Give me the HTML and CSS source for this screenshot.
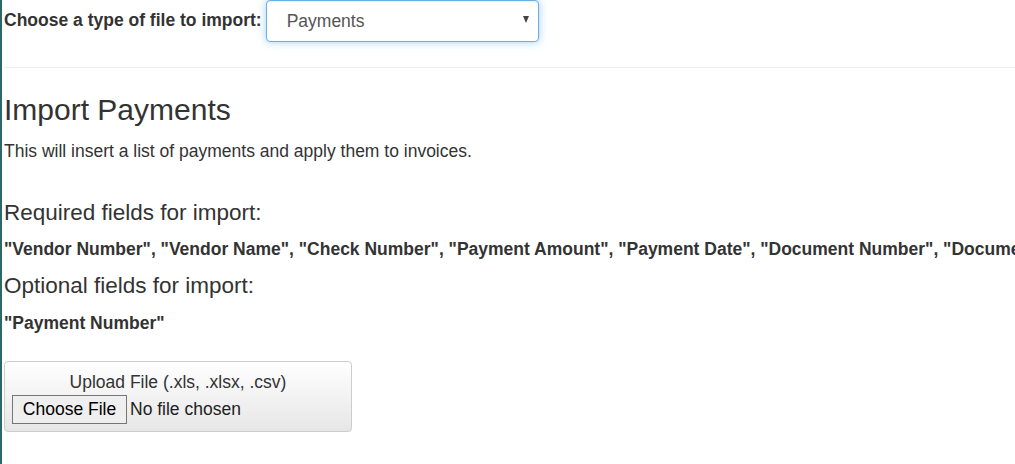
FILE: index.html
```html
<!DOCTYPE html>
<html>
<head>
<meta charset="utf-8">
<link rel="stylesheet" href="styles.css">
</head>
<body>
<div class="page">
  <div class="type-row">
    <label class="type-label" for="type">Choose a type of file to import:</label>
    <div class="select-wrap">
      <select id="type" class="type-select">
        <option>Payments</option>
      </select>
    </div>
  </div>
  <hr class="divider">
  <h2 class="title">Import Payments</h2>
  <p class="desc">This will insert a list of payments and apply them to invoices.</p>
  <h4 class="fields-head">Required fields for import:</h4>
  <div class="fields">"Vendor Number", "Vendor Name", "Check Number", "Payment Amount", "Payment Date", "Document Number", "Document Amount", "Discount Amount"</div>
  <h4 class="fields-head">Optional fields for import:</h4>
  <div class="fields">"Payment Number"</div>
  <div class="upload">
    <div class="upload-title">Upload File (.xls, .xlsx, .csv)</div>
    <div class="file-row"><button class="file-btn" type="button">Choose File</button><span class="file-none">No file chosen</span></div>
  </div>
</div>
</body>
</html>
```
FILE: styles.css
```css
html, body {
  margin: 0;
  padding: 0;
  background: #fff;
  overflow: hidden;
}
body {
  font-family: "Liberation Sans", Arial, sans-serif;
  color: #333;
  font-size: 17.5px;
}
.page {
  border-left: 2px solid #2d6868;
  padding-left: 2px;
  min-height: 464px;
  box-sizing: border-box;
  white-space: nowrap;
  overflow: hidden;
}
.type-row {
  display: flex;
  align-items: center;
  height: 42px;
}
.type-label {
  font-weight: bold;
  font-size: 17.5px;
  color: #333;
  position: relative;
  top: -1px;
}
.select-wrap {
  position: relative;
  margin-left: 4px;
}
.select-wrap::after {
  content: "";
  position: absolute;
  right: 10px;
  top: 16px;
  border-left: 3.5px solid transparent;
  border-right: 3.5px solid transparent;
  border-top: 7px solid #444;
}
.type-select {
  -webkit-appearance: none;
  appearance: none;
  display: block;
  width: 273px;
  height: 42px;
  box-sizing: border-box;
  border: 1px solid #66afe9;
  border-radius: 4px;
  background: #fff;
  padding: 0 20px;
  font-family: "Liberation Sans", Arial, sans-serif;
  font-size: 17.5px;
  color: #555;
  box-shadow: inset 0 1px 1px rgba(0,0,0,.075), 0 0 8px rgba(102,175,233,.6);
  outline: none;
}
.divider {
  border: 0;
  border-top: 1px solid #eee;
  margin: 25px 0 0 0;
}
.title {
  font-size: 30px;
  font-weight: normal;
  margin: 25px 0 0 0;
  line-height: 33px;
}
.desc {
  margin: 13px 0 0 0;
  line-height: 25px;
}
.fields-head {
  font-size: 22.5px;
  font-weight: normal;
  margin: 36px 0 0 0;
  line-height: 26px;
}
.fields-head + .fields + .fields-head {
  margin-top: 11px;
}
.fields {
  font-weight: bold;
  margin-top: 11px;
  line-height: 25px;
}
.fields-head + .fields + .fields-head + .fields {
  margin-top: 12px;
}
.upload {
  margin-top: 25px;
  width: 348px;
  height: 71px;
  box-sizing: border-box;
  border: 1px solid #ccc;
  border-radius: 4px;
  background: linear-gradient(#fff, #e6e6e6);
  text-align: center;
  padding-top: 8px;
}
.upload-title {
  line-height: 25px;
}
.file-row {
  display: flex;
  align-items: center;
  margin-left: 7px;
}
.file-btn {
  font-family: "Liberation Sans", Arial, sans-serif;
  font-size: 17.5px;
  color: #000;
  background: #efefef;
  border: 1px solid #767676;
  border-radius: 0;
  height: 29px;
  width: 115px;
  padding: 0;
}
.file-none {
  margin-left: 3px;
  color: #222;
}
```
